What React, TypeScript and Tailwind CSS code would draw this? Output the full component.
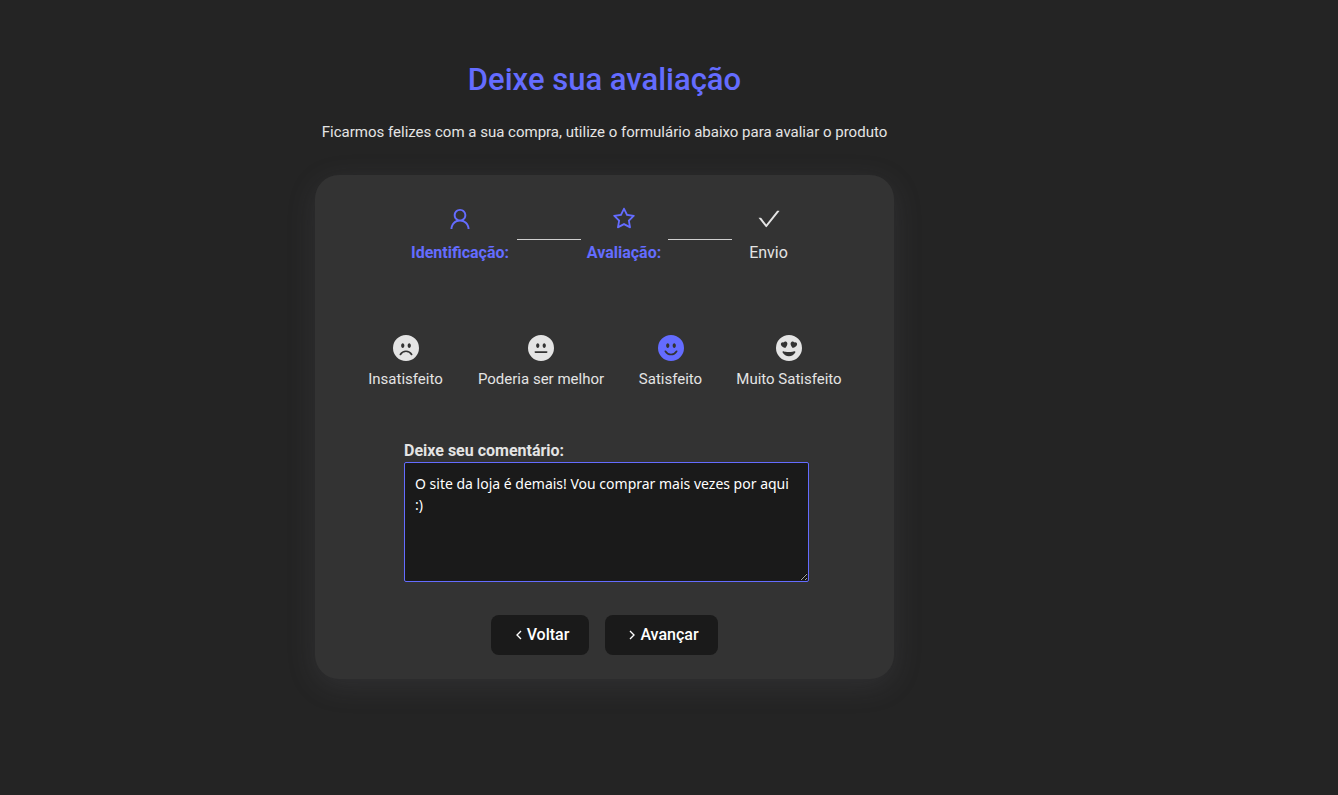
import { useState } from "react";
import { AiOutlineCheck, AiOutlineStar, AiOutlineUser } from "react-icons/ai";
import {
  BsFillEmojiFrownFill,
  BsFillEmojiHeartEyesFill,
  BsFillEmojiNeutralFill,
  BsFillEmojiSmileFill,
} from "react-icons/bs";
import { GrFormNext, GrFormPrevious } from "react-icons/gr";

const ratings = [
  { value: "unsatisfied", label: "Insatisfeito", Icon: BsFillEmojiFrownFill },
  { value: "neutral", label: "Poderia ser melhor", Icon: BsFillEmojiNeutralFill },
  { value: "satisfied", label: "Satisfeito", Icon: BsFillEmojiSmileFill },
  { value: "very_satisfied", label: "Muito Satisfeito", Icon: BsFillEmojiHeartEyesFill },
];

function Steps() {
  return (
    <ol className="flex justify-center gap-[7px] leading-6">
      <li className="flex w-[99px] flex-col items-center gap-[9px] font-bold text-[#646cff]">
        <AiOutlineUser size={26} />
        <span className="whitespace-nowrap">Identificação:</span>
      </li>
      <li aria-hidden="true" className="mt-[33px] h-px w-16 bg-[#cfcfcf]" />
      <li className="flex w-[73px] flex-col items-center gap-[9px] font-bold text-[#646cff]">
        <AiOutlineStar size={26} />
        <span className="whitespace-nowrap">Avaliação:</span>
      </li>
      <li aria-hidden="true" className="mt-[33px] h-px w-16 bg-[#cfcfcf]" />
      <li className="flex w-15 flex-col items-center gap-[9px]">
        <AiOutlineCheck size={26} />
        <span>Envio</span>
      </li>
    </ol>
  );
}

export default function App() {
  const [rating, setRating] = useState("satisfied");
  const [comment, setComment] = useState("O site da loja é demais! Vou comprar mais vezes por aqui :)");

  return (
    <div className="flex min-h-screen justify-center bg-[#242424] pr-[129px] font-['Roboto',sans-serif] text-base text-[#e4e4e4]">
      <main className="w-full max-w-[579px] pt-14 pb-16">
        <header className="text-center">
          <h1 className="text-[31px] leading-[48px] font-medium text-[#646cff]">Deixe sua avaliação</h1>
          <p className="mt-4 text-[15px] leading-6">
            Ficarmos felizes com a sua compra, utilize o formulário abaixo para avaliar o produto
          </p>
        </header>
        <section className="mt-[31px] rounded-3xl bg-[#333333] pt-[31px] pb-6 shadow-[0_7px_29px_rgba(100,100,111,0.2)]">
          <Steps />
          <form onSubmit={(event) => event.preventDefault()}>
            <fieldset
              aria-label="Nível de satisfação"
              className="mt-[70px] grid grid-cols-[78px_129px_66px_107px] justify-center gap-8 text-[15px]"
            >
              {ratings.map(({ value, label, Icon }) => (
                <label key={value} className="flex cursor-pointer flex-col items-center gap-1.5 leading-6">
                  <input
                    type="radio"
                    name="rating"
                    value={value}
                    checked={rating === value}
                    onChange={() => setRating(value)}
                    className="peer sr-only"
                  />
                  <Icon size={26} className="peer-checked:text-[#646cff]" />
                  <span className="whitespace-nowrap">{label}</span>
                </label>
              ))}
            </fieldset>
            <div className="mt-12 flex justify-center pl-1">
              <div className="flex w-full max-w-[405px] flex-col">
                <label htmlFor="comment" className="leading-[23px] font-bold">
                  Deixe seu comentário:
                </label>
                <textarea
                  id="comment"
                  value={comment}
                  onChange={(event) => setComment(event.target.value)}
                  className="h-[120px] rounded-xs border border-[#646cff] bg-[#1a1a1a] p-2.5 font-['Noto_Sans',sans-serif] text-sm leading-[21px] text-white outline-none"
                />
              </div>
            </div>
            <div className="mt-[33px] flex justify-center gap-4 leading-6 font-medium text-white">
              <button type="button" className="flex h-10 w-[98px] items-center justify-center rounded-lg bg-[#1a1a1a]">
                <GrFormPrevious size={16} />
                <span>Voltar</span>
              </button>
              <button type="submit" className="flex h-10 w-[113px] items-center justify-center rounded-lg bg-[#1a1a1a]">
                <GrFormNext size={16} />
                <span>Avançar</span>
              </button>
            </div>
          </form>
        </section>
      </main>
    </div>
  );
}
